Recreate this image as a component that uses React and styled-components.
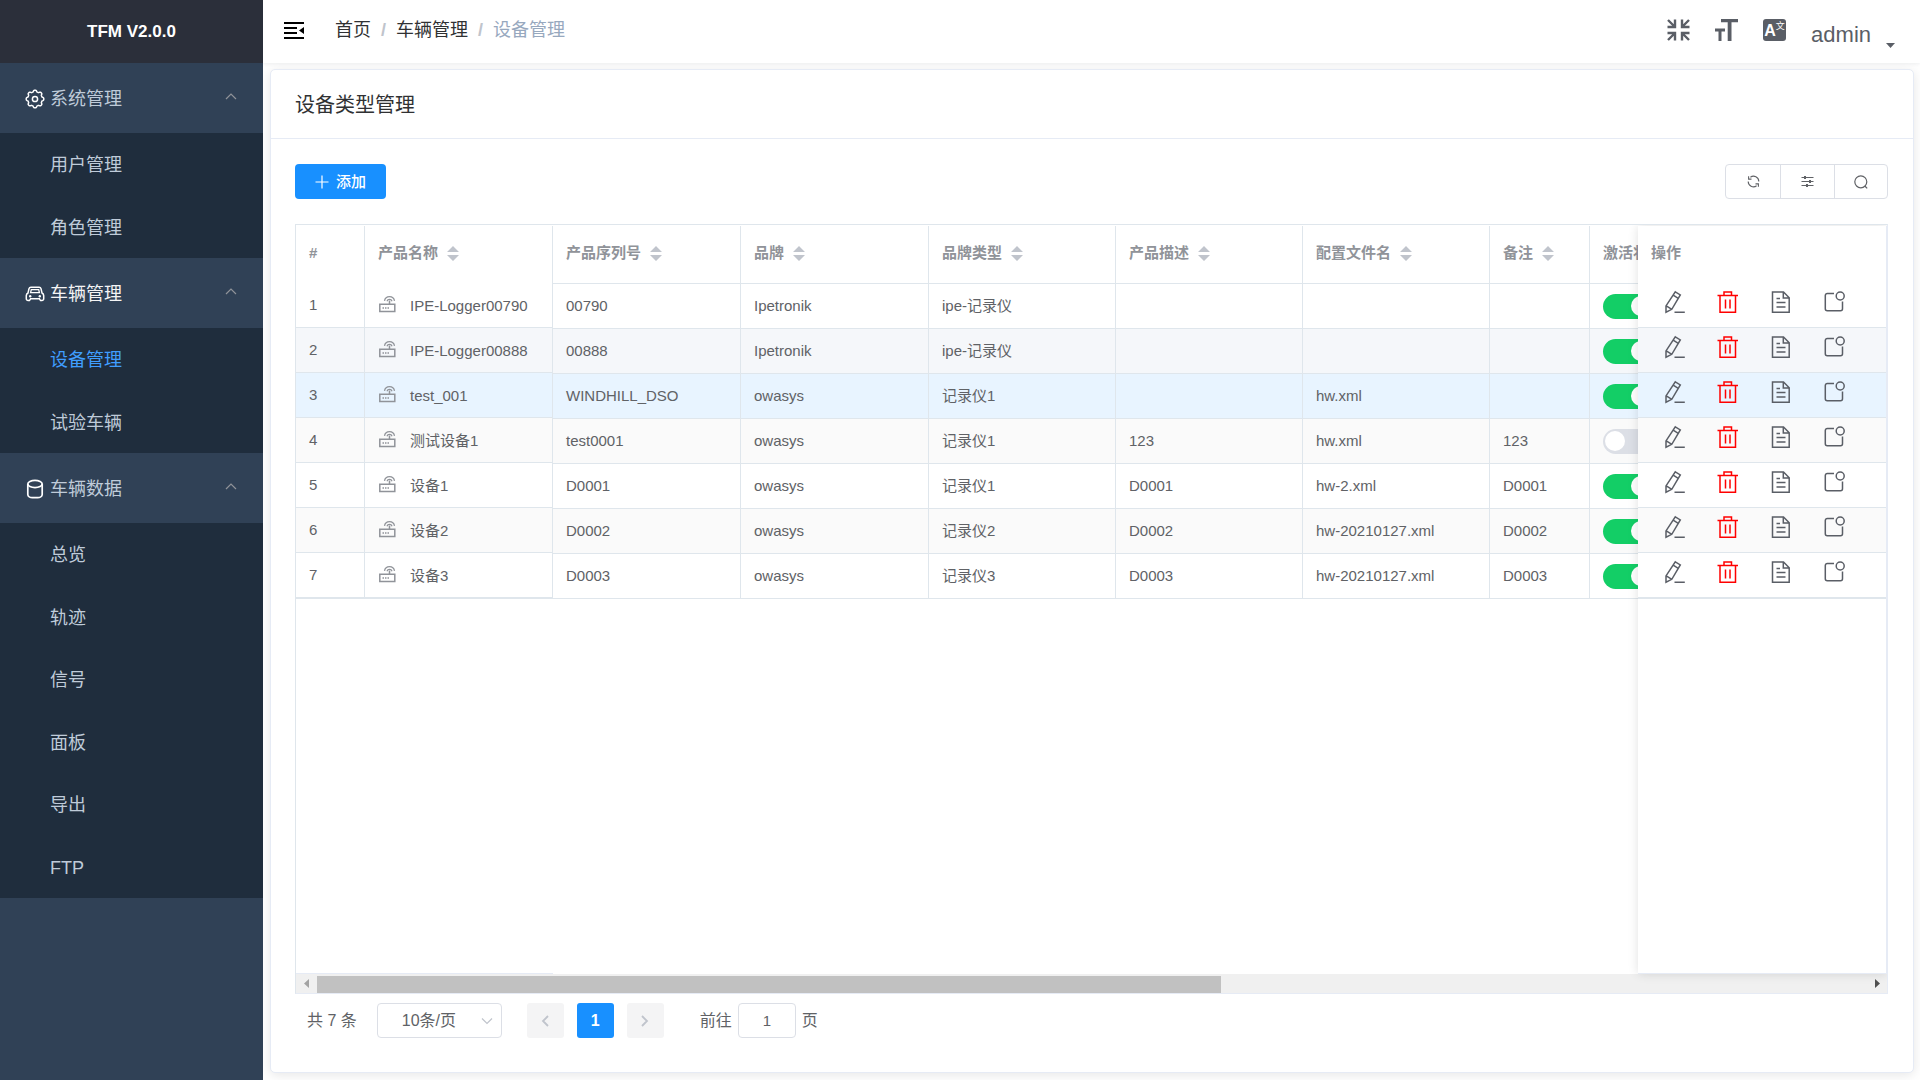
import React, { useState } from 'react';
import styled, { createGlobalStyle, css } from 'styled-components';

const GlobalStyle = createGlobalStyle`
  * {
    box-sizing: border-box;
  }

  body {
    margin: 0;
    background: #fff;
    color: #606266;
    font-family: 'Liberation Sans', 'Noto Sans CJK SC', sans-serif;
    font-size: 15px;
  }

  button,
  input,
  select {
    font-family: inherit;
  }
`;

const Layout = styled.div`
  display: flex;
  min-height: 100vh;
`;

const Sidebar = styled.aside`
  flex: none;
  width: 263px;
  background: #304156;
`;

const Logo = styled.h1`
  display: flex;
  align-items: center;
  justify-content: center;
  height: 63px;
  margin: 0;
  background: #2b2f3a;
  color: #fff;
  font-size: 17px;
  font-weight: 700;
`;

const GroupTitle = styled.button`
  display: flex;
  align-items: center;
  width: 100%;
  height: 70px;
  padding: 2px 26px 0 25px;
  border: 0;
  background: transparent;
  color: ${({ $active }) => ($active ? '#f4f4f5' : '#bfcbd9')};
  font-size: 18px;
  line-height: 26px;
  text-align: left;
  cursor: pointer;

  svg:first-child {
    margin-right: 5px;
    color: #fff;
  }

  svg:last-child {
    margin-bottom: 2px;
    margin-left: auto;
    color: #909399;
  }
`;

const SubMenu = styled.nav`
  background: #1f2d3d;
`;

const SubItem = styled.a`
  display: flex;
  align-items: center;
  height: 62px;
  padding: 2px 0 0 50px;
  color: ${({ $active }) => ($active ? '#409eff' : '#bfcbd9')};
  font-size: 18px;
  line-height: 26px;
  text-decoration: none;

  &:nth-child(even) {
    height: 63px;
  }
`;

const Main = styled.div`
  display: flex;
  flex: 1;
  flex-direction: column;
  min-width: 0;
`;

const Navbar = styled.header`
  position: relative;
  z-index: 2;
  display: flex;
  align-items: center;
  justify-content: space-between;
  height: 63px;
  padding: 0 25px 3px 21px;
  background: #fff;
  box-shadow: 0 1px 4px rgba(0, 21, 41, 0.08);
`;

const NavGroup = styled.div`
  display: flex;
  align-items: center;
`;

const IconButton = styled.button`
  display: flex;
  padding: 0;
  border: 0;
  background: transparent;
  color: ${({ $color }) => $color || '#5a5e66'};
  cursor: pointer;
`;

const Breadcrumb = styled.nav`
  display: flex;
  margin-left: 31px;
  font-size: 18px;
  line-height: 26px;
`;

const Crumb = styled.a`
  color: #303133;
  text-decoration: none;
`;

const CurrentCrumb = styled.span`
  color: #97a8be;
`;

const Separator = styled.span`
  margin: 0 10px;
  color: #c0c4cc;
  font-weight: 700;
`;

const NavTools = styled(NavGroup)`
  gap: 25px;
`;

const LangButton = styled.button`
  display: flex;
  align-items: flex-start;
  justify-content: center;
  width: 23px;
  height: 22px;
  padding: 0;
  border: 0;
  border-radius: 3px;
  background: #5a5e66;
  color: #fff;
  font-size: 16px;
  font-weight: 700;
  line-height: 24px;
  overflow: hidden;
  cursor: pointer;

  small {
    font-size: 9px;
    font-weight: 400;
    line-height: 15px;
  }
`;

const UserMenu = styled.button`
  display: flex;
  align-items: flex-end;
  gap: 15px;
  margin-top: 10px;
  padding: 0;
  border: 0;
  background: transparent;
  color: #5a5e66;
  font-size: 22px;
  line-height: 26px;
  cursor: pointer;
`;

const Card = styled.section`
  display: flex;
  flex: 1;
  flex-direction: column;
  margin: 6px 6px 7px 7px;
  border: 1px solid #e6ebf5;
  border-radius: 5px;
  background: #fff;
  box-shadow: 0 2px 12px rgba(0, 0, 0, 0.1);
`;

const CardTitle = styled.h2`
  display: flex;
  align-items: center;
  height: 69px;
  margin: 0;
  padding: 1px 24px 0;
  border-bottom: 1px solid #e6ebf5;
  color: #303133;
  font-size: 20px;
  font-weight: 400;
  line-height: 28px;
`;

const CardBody = styled.div`
  display: flex;
  flex: 1;
  flex-direction: column;
  min-width: 0;
  padding: 25px 25px 34px 24px;
`;

const Toolbar = styled.div`
  display: flex;
  justify-content: space-between;
  margin-bottom: 25px;
`;

const AddButton = styled.button`
  display: flex;
  align-items: center;
  justify-content: center;
  gap: 7px;
  width: 91px;
  height: 35px;
  padding: 0;
  border: 0;
  border-radius: 4px;
  background: #1890ff;
  color: #fff;
  font-size: 15px;
  font-weight: 500;
  line-height: 20px;
  cursor: pointer;
`;

const ToolGroup = styled.div`
  display: flex;
  border: 1px solid #dcdfe6;
  border-radius: 4px;
`;

const ToolButton = styled.button`
  display: flex;
  align-items: center;
  justify-content: center;
  width: 54px;
  height: 33px;
  padding: 0;
  border: 0;
  background: transparent;
  color: #606266;
  cursor: pointer;

  & + & {
    border-left: 1px solid #dcdfe6;
  }

  &:last-child {
    width: 53px;
  }
`;

const TableFrame = styled.div`
  display: flex;
  flex: 1;
  flex-direction: column;
  overflow: hidden;
  padding-top: 1px;
  border: 1px solid #dfe6ec;
  border-right-color: #e6ebf5;
  border-bottom-color: #e6ebf5;
`;

const Panes = styled.div`
  display: flex;
  flex: 1;
`;

const Pane = styled.div`
  flex: none;
  background: #fff;
  border-bottom: 1px solid #e6ebf5;
`;

const ScrollPane = styled.div`
  flex: 1;
  min-width: 0;
  overflow-x: auto;
  scrollbar-width: none;
`;

const ActionPane = styled(Pane)`
  position: relative;
  z-index: 1;
  border-right: 1px solid #e6ebf5;
  box-shadow: 0 0 10px rgba(0, 0, 0, 0.12);
`;

const Table = styled.table`
  width: ${({ $width }) => $width}px;
  border-spacing: 0;
  table-layout: fixed;
  ${({ $fixed }) => $fixed && css`
    border-bottom: 1px solid #dfe6ec;
  `}
`;

const HeadCell = styled.th`
  width: ${({ $width }) => $width}px;
  height: ${({ $fixed }) => ($fixed ? 57 : 58)}px;
  padding: 0 0 3px 13px;
  border-right: 1px solid #dfe6ec;
  border-bottom: ${({ $fixed }) => ($fixed ? '0' : '1px solid #dfe6ec')};
  color: #909399;
  font-size: 15px;
  font-weight: 700;
  line-height: 20px;
  text-align: left;
  white-space: nowrap;

  &:last-child {
    border-right-width: ${({ $last }) => ($last ? 0 : 1)}px;
  }
`;

const HeadLabel = styled.span`
  display: flex;
  align-items: center;
  gap: 9px;
`;

const rowColors = {
  plain: '#fff',
  stripe: '#fafafa',
  hover: '#f5f7fa',
  current: '#e8f4ff',
};

const Row = styled.tr`
  background: ${({ $tone }) => rowColors[$tone]};
`;

const Cell = styled.td`
  height: 45px;
  padding: 0 0 0 13px;
  border-right: 1px solid #dfe6ec;
  border-bottom: 1px solid #dfe6ec;
  font-size: 15px;
  line-height: 20px;
  white-space: nowrap;
`;

const ActionCell = styled(Cell)`
  padding: 0 0 6px 25px;
  border-right: 0;
`;

const DeviceName = styled.span`
  display: flex;
  align-items: center;
  gap: 14px;
  padding-top: 2px;

  svg {
    margin-bottom: 5px;
    color: #909399;
  }
`;

const Actions = styled.div`
  display: flex;
  gap: 29px;
`;

const Switch = styled.input`
  display: flex;
  align-items: center;
  appearance: none;
  width: 50px;
  height: 25px;
  margin: 0;
  padding: 0 2px;
  border-radius: 13px;
  background: #dcdfe6;
  cursor: pointer;

  &::before {
    content: '';
    width: 20px;
    height: 20px;
    border-radius: 50%;
    background: #fff;
  }

  &:checked {
    justify-content: flex-end;
    background: #13ce66;
  }
`;

const ScrollBar = styled.div`
  display: flex;
  align-items: center;
  justify-content: space-between;
  height: 19px;
  padding: 0 7px 0 8px;
  background: #f0f0f0;
`;

const ScrollTrack = styled.div`
  flex: 1;
  margin-left: 8px;
`;

const ScrollThumb = styled.div`
  width: 58%;
  height: 17px;
  margin-top: 1px;
  background: #c1c1c1;
`;

const Pagination = styled.div`
  display: flex;
  align-items: center;
  margin-top: 9px;
  padding-left: 12px;
  font-size: 16px;
  line-height: 22px;
`;

const SizePicker = styled.label`
  display: grid;
  align-items: center;
  width: 125px;
  margin: 0 25px 0 20px;

  select,
  svg {
    grid-area: 1 / 1;
  }

  select {
    width: 100%;
    height: 35px;
    padding: 0 24px;
    border: 1px solid #dcdfe6;
    border-radius: 4px;
    appearance: none;
    background: #fff;
    color: #606266;
    font-size: 16px;
  }

  svg {
    justify-self: end;
    margin-right: 9px;
    color: #c0c4cc;
    pointer-events: none;
  }
`;

const PageButton = styled.button`
  display: flex;
  align-items: center;
  justify-content: center;
  width: 37px;
  height: 35px;
  margin-right: 13px;
  padding: 0;
  border: 0;
  border-radius: 3px;
  background: ${({ $current }) => ($current ? '#1890ff' : '#f4f4f5')};
  color: ${({ $current }) => ($current ? '#fff' : '#c0c4cc')};
  font-size: 16px;
  font-weight: 700;
`;

const Jumper = styled.label`
  display: flex;
  align-items: center;
  gap: 6px;
  margin-left: 23px;

  input {
    width: 58px;
    height: 35px;
    padding: 0;
    border: 1px solid #dcdfe6;
    border-radius: 4px;
    color: #606266;
    font-size: 15px;
    text-align: center;
  }
`;

function Svg({ w = 24, h = w, box, stroke = 1.5, children }) {
  return (
    <svg
      width={w}
      height={h}
      viewBox={box || `0 0 ${w} ${h}`}
      fill="none"
      stroke="currentColor"
      strokeWidth={stroke}
      aria-hidden="true"
    >
      {children}
    </svg>
  );
}

// wavy outline with eight lobes
const gearPath = Array.from({ length: 96 }, (_, i) => {
  const a = (i / 96) * Math.PI * 2;
  const r = 8 + 0.8 * Math.tanh(2.2 * Math.cos(8 * a));
  return `${i ? 'L' : 'M'}${(10 + r * Math.cos(a)).toFixed(2)} ${(10 + r * Math.sin(a)).toFixed(2)}`;
}).join('') + 'Z';

const GearIcon = () => (
  <Svg w={20}>
    <path d={gearPath} strokeLinejoin="round" />
    <circle cx="10" cy="10" r="2.6" />
  </Svg>
);

const CarIcon = () => (
  <Svg w={20}>
    <path d="M6 3.2h8a2 2 0 0 1 2 1.4l1 4.4a3 3 0 0 1 1.7 2.6v3.2a1.8 1.8 0 0 1-1.8 1.8h-1.3l-1.2-1.8H5.6l-1.2 1.8H3.1a1.8 1.8 0 0 1-1.8-1.8v-3.2A3 3 0 0 1 3 9l1-4.4a2 2 0 0 1 2-1.4z" />
    <path d="M6.3 5.6h7.4l.7 3H5.6z" strokeWidth="1.3" />
    <circle cx="5.2" cy="12.2" r="1.2" fill="currentColor" stroke="none" />
    <circle cx="14.8" cy="12.2" r="1.2" fill="currentColor" stroke="none" />
  </Svg>
);

const DataIcon = () => (
  <Svg w={20} stroke={1.7}>
    <ellipse cx="10" cy="5" rx="7.2" ry="3.6" />
    <path d="M2.8 5v10.4c0 2 2.4 3.2 4.6 3.2h5.2c2.2 0 4.6-1.2 4.6-3.2V5" />
  </Svg>
);

const ChevronUp = () => (
  <Svg w={12} h={12} stroke={1.2}>
    <path d="M1 7l5-5 5 5" />
  </Svg>
);

const HamburgerIcon = () => (
  <Svg w={20} h={17} stroke={0}>
    <path fill="#000" d="M0 0h20v2H0zM0 5h13v2H0zM0 10h13v2H0zM0 15h20v2H0zM20 5v7l-5-3.5z" />
  </Svg>
);

const ExitFullscreenIcon = () => (
  <Svg w={23} h={22} stroke={2.4}>
    <path d="M1 1l6.500 6.500M8 .5V8H.5M22 1l-6.500 6.500M15 .5V8h7.500M1 21l6.500-6.500M8 21.500V14H.5M22 21l-6.500-6.500M15 21.500V14h7.500" />
  </Svg>
);

const FontSizeIcon = () => (
  <Svg w={23} h={22} stroke={0}>
    <path fill="currentColor" d="M6 0h17v3.2h-6.500V22h-3.800V3.200H6zM0 9.600h10v2.800H6.500V22h-3v-9.600H0z" />
  </Svg>
);

const CaretDown = () => (
  <Svg w={9} h={5} stroke={0}>
    <path fill="currentColor" d="M0 0h9L4.500 5z" />
  </Svg>
);

const PlusIcon = () => (
  <Svg w={14} stroke={1.2}>
    <path d="M7 .5v13M.5 7h13" />
  </Svg>
);

const RefreshIcon = () => (
  <Svg w={13} stroke={1.1}>
    <path d="M3.400 2.200A5.300 5.300 0 0 1 11.800 6.500M9.600 10.800A5.300 5.300 0 0 1 1.200 6.500M1.600 1.200v2.900h2.900M11.400 11.800V8.900H8.500" />
  </Svg>
);

const OperationIcon = () => (
  <Svg w={13} stroke={1.1}>
    <path d="M.5 2.500h12M.5 6.500h12M.5 10.500h12" />
    <path d="M4 1v3M9 5v3M6 9v3" strokeWidth="2" />
  </Svg>
);

const SearchIcon = () => (
  <Svg w={14} stroke={1.2}>
    <circle cx="6.800" cy="6.800" r="6" />
    <path d="M10.800 11l2.400 2.400" />
  </Svg>
);

const SortIcon = () => (
  <Svg w={12} h={15} stroke={0}>
    <path fill="#c0c4cc" d="M6 0l6 6H0zM0 9h12l-6 6z" />
  </Svg>
);

const RouterIcon = () => (
  <Svg w={18} stroke={1.5}>
    <path d="M1.800 9.300h15v7.300h-15zM11.500 9V5.500" />
    <path d="M9 6.300a2.600 2.600 0 0 1 5 0M6.500 5.800a5.100 5.100 0 0 1 10 0" strokeWidth="1.3" />
    <path d="M4.500 13h1.500M7 13h1.500M9.500 13h1.500" />
  </Svg>
);

const EditIcon = () => (
  <Svg>
    <path d="M12.300 1.800l5 3.100L8.800 19.300 3 22.200v-6.300zM10.200 5.200l5 3.100M3.300 15.900l5.500 3.400M11.500 22.300h10.300" />
  </Svg>
);

const TrashIcon = () => (
  <Svg>
    <path d="M1.500 5.500h20.500M8 5.500V2h7.500v3.500M4 5.500v16.800h15.500V5.500M9.500 9.500v9M14 9.500v9" />
  </Svg>
);

const DocIcon = () => (
  <Svg>
    <path d="M3.500 2h11l5.700 5.700v14.600H3.500zM14.300 2v5.900h5.900M7.500 8.500h3.500M7.500 12.500h9M7.500 17h9" />
  </Svg>
);

const NoteIcon = () => (
  <Svg>
    <path d="M12 3.500H5.300a2 2 0 0 0-2 2v13.200a2 2 0 0 0 2 2h13.200a2 2 0 0 0 2-2V11.500" />
    <circle cx="18.200" cy="6" r="4" />
  </Svg>
);

const menu = [
  { title: '系统管理', icon: GearIcon, items: ['用户管理', '角色管理'] },
  { title: '车辆管理', icon: CarIcon, active: true, items: ['设备管理', '试验车辆'] },
  { title: '车辆数据', icon: DataIcon, items: ['总览', '轨迹', '信号', '面板', '导出', 'FTP'] },
];

const columns = [
  { key: 'serial', label: '产品序列号', width: 188 },
  { key: 'brand', label: '品牌', width: 188 },
  { key: 'type', label: '品牌类型', width: 187 },
  { key: 'desc', label: '产品描述', width: 187 },
  { key: 'config', label: '配置文件名', width: 187 },
  { key: 'remark', label: '备注', width: 100 },
];

const devices = [
  { name: 'IPE-Logger00790', serial: '00790', brand: 'Ipetronik', type: 'ipe-记录仪', active: true, tone: 'plain' },
  { name: 'IPE-Logger00888', serial: '00888', brand: 'Ipetronik', type: 'ipe-记录仪', active: true, tone: 'hover' },
  { name: 'test_001', serial: 'WINDHILL_DSO', brand: 'owasys', type: '记录仪1', config: 'hw.xml', active: true, tone: 'current' },
  { name: '测试设备1', serial: 'test0001', brand: 'owasys', type: '记录仪1', desc: '123', config: 'hw.xml', remark: '123', active: false, tone: 'stripe' },
  { name: '设备1', serial: 'D0001', brand: 'owasys', type: '记录仪1', desc: 'D0001', config: 'hw-2.xml', remark: 'D0001', active: true, tone: 'plain' },
  { name: '设备2', serial: 'D0002', brand: 'owasys', type: '记录仪2', desc: 'D0002', config: 'hw-20210127.xml', remark: 'D0002', active: true, tone: 'stripe' },
  { name: '设备3', serial: 'D0003', brand: 'owasys', type: '记录仪3', desc: 'D0003', config: 'hw-20210127.xml', remark: 'D0003', active: true, tone: 'plain' },
];

function SideMenu() {
  return (
    <Sidebar>
      <Logo>TFM V2.0.0</Logo>
      {menu.map(({ title, icon: Icon, active, items }) => (
        <div key={title}>
          <GroupTitle type="button" aria-expanded="true" $active={active}>
            <Icon />
            {title}
            <ChevronUp />
          </GroupTitle>
          <SubMenu aria-label={title}>
            {items.map((item) => (
              <SubItem key={item} href="#" $active={item === '设备管理'}>
                {item}
              </SubItem>
            ))}
          </SubMenu>
        </div>
      ))}
    </Sidebar>
  );
}

function TopBar() {
  return (
    <Navbar>
      <NavGroup>
        <IconButton type="button" aria-label="收起菜单">
          <HamburgerIcon />
        </IconButton>
        <Breadcrumb>
          <Crumb href="#">首页</Crumb>
          <Separator>/</Separator>
          <Crumb href="#">车辆管理</Crumb>
          <Separator>/</Separator>
          <CurrentCrumb>设备管理</CurrentCrumb>
        </Breadcrumb>
      </NavGroup>
      <NavTools>
        <IconButton type="button" aria-label="退出全屏">
          <ExitFullscreenIcon />
        </IconButton>
        <IconButton type="button" aria-label="字体大小">
          <FontSizeIcon />
        </IconButton>
        <LangButton type="button" aria-label="语言">
          A<small>文</small>
        </LangButton>
        <UserMenu type="button">
          admin
          <CaretDown />
        </UserMenu>
      </NavTools>
    </Navbar>
  );
}

function DeviceTable() {
  const [rows, setRows] = useState(devices);

  const toggle = (name) => {
    setRows(rows.map((row) => (row.name === name ? { ...row, active: !row.active } : row)));
  };

  return (
    <TableFrame>
      <Panes>
        <Pane>
          <Table $width={257} $fixed>
            <thead>
              <tr>
                <HeadCell $width={69} $fixed>#</HeadCell>
                <HeadCell $width={188} $fixed>
                  <HeadLabel>
                    产品名称
                    <SortIcon />
                  </HeadLabel>
                </HeadCell>
              </tr>
            </thead>
            <tbody>
              {rows.map((row, index) => (
                <Row key={row.name} $tone={row.tone}>
                  <Cell>{index + 1}</Cell>
                  <Cell>
                    <DeviceName>
                      <RouterIcon />
                      {row.name}
                    </DeviceName>
                  </Cell>
                </Row>
              ))}
            </tbody>
          </Table>
        </Pane>

        <ScrollPane>
          <Table $width={1225}>
            <thead>
              <tr>
                {columns.map((col) => (
                  <HeadCell key={col.key} $width={col.width}>
                    <HeadLabel>
                      {col.label}
                      <SortIcon />
                    </HeadLabel>
                  </HeadCell>
                ))}
                <HeadCell $width={188}>激活状态</HeadCell>
              </tr>
            </thead>
            <tbody>
              {rows.map((row) => (
                <Row key={row.name} $tone={row.tone}>
                  {columns.map((col) => (
                    <Cell key={col.key}>{row[col.key]}</Cell>
                  ))}
                  <Cell>
                    <Switch
                      type="checkbox"
                      aria-label={`激活 ${row.name}`}
                      checked={row.active}
                      onChange={() => toggle(row.name)}
                    />
                  </Cell>
                </Row>
              ))}
            </tbody>
          </Table>
        </ScrollPane>

        <ActionPane>
          <Table $width={248} $fixed>
            <thead>
              <tr>
                <HeadCell $width={248} $fixed $last>操作</HeadCell>
              </tr>
            </thead>
            <tbody>
              {rows.map((row) => (
                <Row key={row.name} $tone={row.tone}>
                  <ActionCell>
                    <Actions>
                      <IconButton type="button" aria-label="编辑">
                        <EditIcon />
                      </IconButton>
                      <IconButton type="button" aria-label="删除" $color="#f00">
                        <TrashIcon />
                      </IconButton>
                      <IconButton type="button" aria-label="详情">
                        <DocIcon />
                      </IconButton>
                      <IconButton type="button" aria-label="消息">
                        <NoteIcon />
                      </IconButton>
                    </Actions>
                  </ActionCell>
                </Row>
              ))}
            </tbody>
          </Table>
        </ActionPane>
      </Panes>
      <ScrollBar>
        <Svg w={5} h={9} stroke={0}>
          <path fill="#a3a3a3" d="M5 0v9L0 4.500z" />
        </Svg>
        <ScrollTrack>
          <ScrollThumb />
        </ScrollTrack>
        <Svg w={5} h={9} stroke={0}>
          <path fill="#505050" d="M0 0v9l5-4.500z" />
        </Svg>
      </ScrollBar>
    </TableFrame>
  );
}

function Pager() {
  return (
    <Pagination>
      <span>共 7 条</span>
      <SizePicker>
        <select defaultValue="10" aria-label="每页条数">
          <option value="10">10条/页</option>
          <option value="20">20条/页</option>
          <option value="50">50条/页</option>
        </select>
        <Svg w={12} h={12} stroke={1.2}>
          <path d="M1 3.500l5 5 5-5" />
        </Svg>
      </SizePicker>
      <PageButton type="button" aria-label="上一页" disabled>
        <Svg w={8} h={12} stroke={1.8}>
          <path d="M7 1L2 6l5 5" />
        </Svg>
      </PageButton>
      <PageButton type="button" $current>1</PageButton>
      <PageButton type="button" aria-label="下一页" disabled>
        <Svg w={8} h={12} stroke={1.8}>
          <path d="M1 1l5 5-5 5" />
        </Svg>
      </PageButton>
      <Jumper>
        前往
        <input type="text" defaultValue="1" />
        页
      </Jumper>
    </Pagination>
  );
}

function App() {
  return (
    <Layout>
      <GlobalStyle />
      <SideMenu />
      <Main>
        <TopBar />
        <Card>
          <CardTitle>设备类型管理</CardTitle>
          <CardBody>
            <Toolbar>
              <AddButton type="button">
                <PlusIcon />
                添加
              </AddButton>
              <ToolGroup>
                <ToolButton type="button" aria-label="刷新">
                  <RefreshIcon />
                </ToolButton>
                <ToolButton type="button" aria-label="列设置">
                  <OperationIcon />
                </ToolButton>
                <ToolButton type="button" aria-label="搜索">
                  <SearchIcon />
                </ToolButton>
              </ToolGroup>
            </Toolbar>
            <DeviceTable />
            <Pager />
          </CardBody>
        </Card>
      </Main>
    </Layout>
  );
}

export default App;
